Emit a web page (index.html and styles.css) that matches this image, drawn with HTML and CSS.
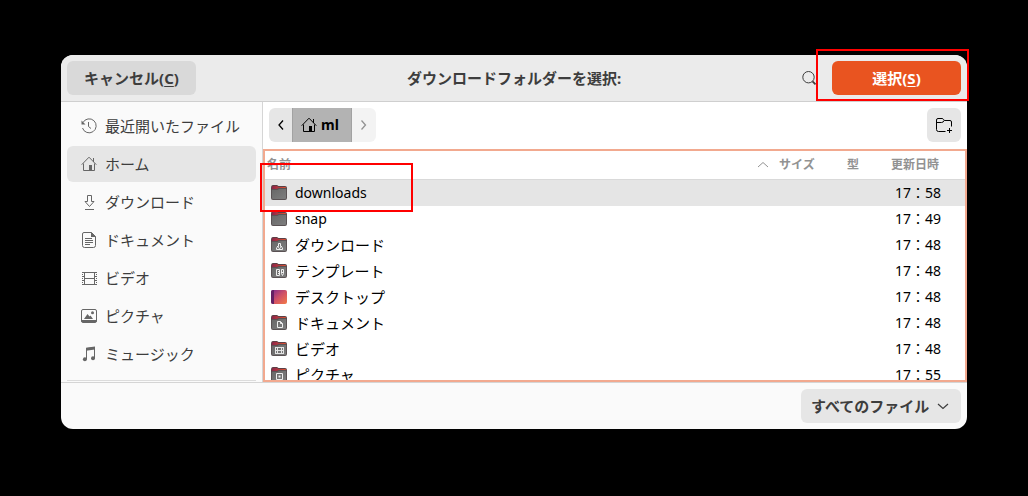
FILE: index.html
```html
<!DOCTYPE html>
<html lang="ja">
<head>
<meta charset="utf-8">
<title>ダウンロードフォルダーを選択</title>
<link rel="stylesheet" href="styles.css">
</head>
<body>
<svg class="defs" aria-hidden="true">
  <defs>
    <linearGradient id="tab" x1="0" x2="1" y1="0" y2="0"><stop offset="0" stop-color="#8d2449"/><stop offset="1" stop-color="#e0532f"/></linearGradient>
    <linearGradient id="front" x1="0" x2="1" y1="0" y2="1"><stop offset="0" stop-color="#686868"/><stop offset="1" stop-color="#7e7e7e"/></linearGradient>
    <linearGradient id="desk" x1="0" x2="1" y1="0" y2="1"><stop offset="0.1" stop-color="#8c3088"/><stop offset="0.5" stop-color="#cf5068"/><stop offset="1" stop-color="#f47b46"/></linearGradient>
    <symbol id="folder" viewBox="0 0 16 16">
      <path d="M0 3Q0 0 2 0H6L7.500 1H14Q16 1 16 3V8H0Z" fill="#5c4046"/>
      <path d="M1 3Q1 1 2 1H6L7.500 2H14Q15 2 15 3V8H1Z" fill="url(#tab)"/>
      <path d="M0 5.500L1 4H6L7.500 3H15L16 4V13Q16 15 14 15H2Q0 15 0 13Z" fill="#5a5254"/>
      <path d="M1 5H6.500L8 4H15V13Q15 14 14 14H2Q1 14 1 13Z" fill="url(#front)"/>
    </symbol>
    <symbol id="home" viewBox="0 0 16 16">
      <path d="M.7 8.700L8 1.200L15.300 8.700M2.500 7.500V14.500H13.500V7.500M12.500 2V6" fill="none" stroke="currentColor"/>
      <path d="M8 9H11V15H8Z" fill="currentColor"/>
    </symbol>
  </defs>
</svg>

<main class="dialog">
  <header class="titlebar">
    <button class="btn btn-cancel" type="button">キャンセル(<u>C</u>)</button>
    <h1 class="title">ダウンロードフォルダーを選択:</h1>
    <div class="title-actions">
      <button class="search" type="button" aria-label="検索">
        <svg class="icon" viewBox="0 0 16 16"><circle cx="7.500" cy="7.200" r="5.700" fill="none" stroke="currentColor"/><path d="M11.500 11.300L14.500 14.300" stroke="currentColor" stroke-width="1.700"/></svg>
      </button>
      <button class="btn btn-select" type="button">選択(<u>S</u>)</button>
    </div>
  </header>

  <div class="body">
    <nav class="sidebar" aria-label="場所">
      <a class="place" href="#recent"><svg class="icon" viewBox="0 0 16 16"><path d="M2 4.500A7 7 0 1 1 1.500 10M7.500 4V8.500L10 10.500" fill="none" stroke="currentColor"/><path d="M.5 2.500V6.500H4.500Z" fill="currentColor"/></svg>最近開いたファイル</a>
      <a class="place place-current" href="#home"><svg class="icon"><use href="#home"/></svg>ホーム</a>
      <a class="place" href="#downloads"><svg class="icon" viewBox="0 0 16 16"><path d="M6.500 1.500H10.500V7.500H13L8.500 12.500L4 7.500H6.500ZM4 15.500H13" fill="none" stroke="currentColor"/></svg>ダウンロード</a>
      <a class="place" href="#documents"><svg class="icon" viewBox="0 0 16 16"><path d="M3 .5H10.500L14.500 4.500V13.500Q14.500 15.500 12.500 15.500H3.500Q1.500 15.500 1.500 13.500V2Q1.500 .5 3 .5ZM4 6.500H11M4 8.500H12M4 10.500H12M4 12.500H9" fill="none" stroke="currentColor"/><path d="M10 0V5H15Z" fill="currentColor"/></svg>ドキュメント</a>
      <a class="place" href="#videos"><svg class="icon" viewBox="0 0 16 16"><path d="M3.500 2V14M13.500 2V14M1 2.500H16M3.500 8.500H13.500M1 14.500H16" fill="none" stroke="currentColor"/><path d="M1.500 2V15M15.500 2V15" stroke="currentColor" stroke-dasharray="1 1"/><path d="M1 6.500H3M1 10.500H3M14 6.500H16M14 10.500H16" stroke="currentColor"/></svg>ビデオ</a>
      <a class="place" href="#pictures"><svg class="icon" viewBox="0 0 16 16"><rect x=".5" y="1.500" width="15" height="13" rx="1.500" fill="none" stroke="currentColor"/><path d="M.5 12H15.500V14H.5ZM3 11L6.500 6L8.500 8.500L9.500 7.500L12 11Z" fill="currentColor"/><circle cx="11.500" cy="4.800" r="1.500" fill="currentColor"/></svg>ピクチャ</a>
      <a class="place" href="#music"><svg class="icon" viewBox="0 0 16 16"><path d="M5.500 13V2.500L13.500 1.500V12" fill="none" stroke="currentColor"/><path d="M5 1.700L14 .5V3.500L5 4.700Z" fill="currentColor"/><circle cx="3.900" cy="13.300" r="2" fill="currentColor"/><circle cx="12" cy="12.300" r="2" fill="currentColor"/></svg>ミュージック</a>
      <hr class="divider">
    </nav>

    <section class="browser">
      <div class="toolbar">
        <div class="pathbar">
          <button class="step step-back" type="button" aria-label="戻る"><svg class="icon" viewBox="0 0 16 16"><path d="M10 3.500L6 8L10 12.500" fill="none" stroke="currentColor" stroke-width="1.300"/></svg></button>
          <button class="crumb" type="button"><svg class="icon"><use href="#home"/></svg>ml</button>
          <button class="step step-next" type="button" aria-label="進む" disabled><svg class="icon" viewBox="0 0 16 16"><path d="M5.500 3.500L9.500 8L5.500 12.500" fill="none" stroke="currentColor" stroke-width="1.300"/></svg></button>
        </div>
        <button class="new-folder" type="button" aria-label="フォルダーを作成"><svg class="icon" viewBox="0 0 16 16"><path d="M9.500 14.500H2.500Q.5 14.500 .5 12.500V3Q.5 1.500 2 1.500H6Q7 1.500 7.500 2.500Q8 3.500 9 3.500H14Q15.500 3.500 15.500 5V9.500M.5 5.500H5.500Q7.500 5.500 8 3.500" fill="none" stroke="currentColor"/><path d="M13.500 11V16M11 13.500H16" stroke="currentColor"/></svg></button>
      </div>

      <div class="listing">
        <table class="files">
          <colgroup><col><col class="col-size"><col class="col-type"><col class="col-date"></colgroup>
          <thead>
            <tr>
              <th scope="col"><span class="sorted">名前<svg class="sort" viewBox="0 0 12 12"><path d="M1 8L6 3.500L11 8" fill="none" stroke="currentColor"/></svg></span></th>
              <th scope="col">サイズ</th><th scope="col">型</th><th scope="col">更新日時</th>
            </tr>
          </thead>
          <tbody>
            <tr class="selected"><td><span class="file latin"><svg class="icon"><use href="#folder"/></svg>downloads</span></td><td></td><td></td><td class="time">17：58</td></tr>
            <tr><td><span class="file latin"><svg class="icon"><use href="#folder"/></svg>snap</span></td><td></td><td></td><td class="time">17：49</td></tr>
            <tr><td><span class="file"><svg class="icon" viewBox="0 0 16 16"><use href="#folder"/><path d="M7.500 6.500H9.500V9.500H11L8.500 11.500L6 9.500H7.500ZM5.500 10.500V12.500H11.500V10.500" fill="none" stroke="#eee"/></svg>ダウンロード</span></td><td></td><td></td><td class="time">17：48</td></tr>
            <tr><td><span class="file"><svg class="icon" viewBox="0 0 16 16"><use href="#folder"/><path d="M5.500 6.500H8.500V12.500H5.500ZM7 8.500H8.500M7 10.500H8.500M10.500 6.500H12.500V10.500L11.500 12.500L10.500 10.500ZM10.500 9.500H12.500" fill="none" stroke="#eee"/></svg>テンプレート</span></td><td></td><td></td><td class="time">17：48</td></tr>
            <tr><td><span class="file"><svg class="icon" viewBox="0 0 16 16"><rect y="1" width="16" height="14" rx="2" fill="url(#desk)"/><path d="M2 1H3V15H2Q0 15 0 13V3Q0 1 2 1Z" fill="#642064"/></svg>デスクトップ</span></td><td></td><td></td><td class="time">17：48</td></tr>
            <tr><td><span class="file"><svg class="icon" viewBox="0 0 16 16"><use href="#folder"/><path d="M6.500 6.500H9.500L11.500 8.500V12.500H6.500ZM9.500 6.500V8.500H11.500" fill="none" stroke="#eee"/></svg>ドキュメント</span></td><td></td><td></td><td class="time">17：48</td></tr>
            <tr><td><span class="file"><svg class="icon" viewBox="0 0 16 16"><use href="#folder"/><path d="M6.500 6V13M10.500 6V13M4 6.500H13M4 9.500H13M4 12.500H13M4.500 6V13M12.500 6V13" fill="none" stroke="#e4e4e4"/></svg>ビデオ</span></td><td></td><td></td><td class="time">17：48</td></tr>
            <tr><td><span class="file"><svg class="icon" viewBox="0 0 16 16"><use href="#folder"/><path d="M5.500 6.500H11.500V12.500H5.500Z" fill="none" stroke="#eee"/><path d="M7.500 8.500H9.500V10.500H7.500Z" fill="#eee"/></svg>ピクチャ</span></td><td></td><td></td><td class="time">17：55</td></tr>
          </tbody>
        </table>
      </div>
    </section>
  </div>

  <footer class="footer">
    <div class="filter">
      <select class="filter-select" aria-label="ファイルの種類"><option>すべてのファイル</option></select>
      <svg class="filter-arrow" viewBox="0 0 12 12"><path d="M1 4L6 8.500L11 4" fill="none" stroke="currentColor" stroke-width="1.200"/></svg>
    </div>
  </footer>
</main>

<div class="mark mark-select"></div>
<div class="mark mark-folder"></div>
</body>
</html>
```
FILE: styles.css
```css
* { box-sizing: border-box; }

body {
  margin: 0;
  height: 100vh;
  padding: 55px 61px 67px;
  background: #000;
  color: #3d3d3d;
  font: 15px/24px "Noto Sans", "Noto Sans CJK JP", sans-serif;
}

button, select {
  margin: 0;
  border: 0;
  padding: 0;
  color: inherit;
  font: inherit;
}

u {
  text-decoration-thickness: 1px;
  text-underline-offset: 2px;
}

.defs { position: absolute; width: 0; height: 0; }

.icon {
  flex: none;
  display: block;
  width: 16px;
  height: 16px;
}

.dialog {
  display: flex;
  flex-direction: column;
  height: 100%;
  overflow: hidden;
  border-radius: 12px;
  background: #fafafa;
}

.titlebar {
  flex: none;
  display: grid;
  grid-template-columns: 1fr auto 1fr;
  align-items: center;
  padding: 6px;
  border-bottom: 1px solid #cfcfcf;
  background: #ebebeb;
}

.title { margin: 0; font-size: 15px; font-weight: 700; }

.btn {
  width: 129px;
  height: 34px;
  border-radius: 6px;
  font-weight: 700;
}

.btn-cancel { background: #d9d9d9; }
.btn-select { background: #e95420; color: #fff; }

.title-actions {
  display: flex;
  align-items: center;
  justify-content: flex-end;
  gap: 15px;
}

.search { background: none; }

.body { flex: 1; display: flex; min-height: 0; }

.sidebar {
  flex: none;
  display: flex;
  flex-direction: column;
  gap: 2px;
  width: 202px;
  padding: 6px;
  border-right: 1px solid #d5d5d5;
  overflow: hidden;
}

.place {
  flex: none;
  display: flex;
  align-items: center;
  gap: 8px;
  height: 36px;
  padding: 0 14px;
  border-radius: 6px;
  color: #3d3d3d;
  text-decoration: none;
}

.place .icon { color: #666; }
.place-current { background: #e6e6e6; }

.divider {
  flex: none;
  width: 100%;
  margin: 6px 0 0;
  border: 0;
  border-top: 1px solid #dcdcdc;
}

.browser {
  flex: 1;
  display: flex;
  flex-direction: column;
  min-width: 0;
  background: #fff;
}

.toolbar {
  flex: none;
  display: flex;
  justify-content: space-between;
  padding: 6px 6px 7px;
  color: #000;
}

.pathbar {
  display: flex;
  height: 34px;
  overflow: hidden;
  border-radius: 6px;
}

.step {
  display: grid;
  place-items: center;
  width: 24px;
  background: #e6e6e6;
}

.step-back { width: 23px; }
.step-next { background: #f3f3f3; color: #929292; }

.crumb {
  display: flex;
  align-items: center;
  gap: 4px;
  padding: 0 12px 0 8px;
  border: solid #a2a2a2;
  border-width: 0 1px;
  background: #b3b3b3;
  font-size: 14px;
  font-weight: 700;
}

.new-folder {
  display: grid;
  place-items: center;
  width: 34px;
  height: 34px;
  border-radius: 6px;
  background: #e6e6e6;
}

.listing {
  flex: 1;
  min-height: 0;
  overflow: hidden;
  border: 2px solid #f2a98f;
}

.files {
  width: 100%;
  table-layout: fixed;
  border-collapse: separate;
  border-spacing: 0;
  color: #000;
}

.col-size { width: 68px; }
.col-type { width: 44px; }
.col-date { width: 78px; }

.files th {
  height: 29px;
  padding: 0 4px;
  border-bottom: 1px solid #d9d9d9;
  color: #929292;
  font-size: 12px;
  font-weight: 700;
  text-align: left;
}

.files th:first-child { padding: 0 6px 0 2px; }

.sorted {
  display: flex;
  align-items: center;
  justify-content: space-between;
}

.sort { width: 12px; height: 12px; }

.files td { height: 26px; padding: 0; }

.file {
  display: flex;
  align-items: center;
  gap: 8px;
  padding-left: 6px;
}

.latin { font-size: 14px; }

.files .time { padding-left: 8px; font-size: 14px; }

.selected { background: #e5e5e5; }

.footer {
  flex: none;
  display: flex;
  justify-content: flex-end;
  padding: 6px;
  border-top: 1px solid #d5d5d5;
}

.filter { position: relative; }

.filter-select {
  display: block;
  width: 160px;
  height: 34px;
  padding-left: 10px;
  border-radius: 6px;
  appearance: none;
  background: #e6e6e6;
  font-weight: 700;
}

.filter-arrow {
  position: absolute;
  top: 11px;
  right: 12px;
  width: 12px;
  height: 12px;
  pointer-events: none;
}

.mark {
  position: absolute;
  width: 153px;
  border: 2px solid #f00;
  pointer-events: none;
}

.mark-select { top: 49px; right: 59px; height: 52px; }
.mark-folder { top: 163px; left: 260px; height: 49px; }
```
